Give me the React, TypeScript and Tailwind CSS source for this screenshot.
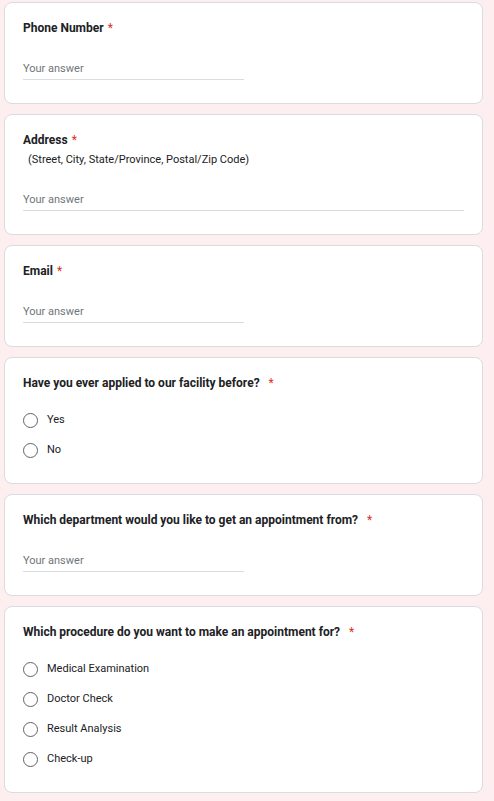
import React from 'react';

type Question =
    | { kind: 'text'; title: string; note?: string; wide?: boolean; gapStar?: boolean }
    | { kind: 'radio'; title: string; options: string[]; gapStar?: boolean };

const questions: Question[] = [
    { kind: 'text', title: 'Phone Number' },
    { kind: 'text', title: 'Address', note: '(Street, City, State/Province, Postal/Zip Code)', wide: true },
    { kind: 'text', title: 'Email' },
    { kind: 'radio', title: 'Have you ever applied to our facility before?', options: ['Yes', 'No'], gapStar: true },
    { kind: 'text', title: 'Which department would you like to get an appointment from?', gapStar: true },
    {
        kind: 'radio',
        title: 'Which procedure do you want to make an appointment for?',
        options: ['Medical Examination', 'Doctor Check', 'Result Analysis', 'Check-up'],
        gapStar: true,
    },
];

const Title: React.FC<{ text: string; gapStar?: boolean }> = ({ text, gapStar }) => (
    <div className="h-4 leading-4 text-[12px] font-bold text-[#202124]">
        {text}
        <span className={`text-[#d93025] font-normal ${gapStar ? 'ml-[9px]' : 'ml-[4px]'}`}>*</span>
    </div>
);

const QuestionCard: React.FC<{ q: Question }> = ({ q }) => {
    return (
        <div className={`bg-white border border-[#dadce0] rounded-lg px-[18px] pt-[17px] ${q.kind === 'radio' ? 'pb-[18px]' : 'pb-[23px]'}`}>
            <Title text={q.title} gapStar={q.gapStar} />

            {q.kind === 'text' && (
                <>
                    {q.note && (
                        <p className="mt-[4px] ml-[5px] h-4 leading-4 text-[11px] text-[#202124]">{q.note}</p>
                    )}
                    {/* answer line */}
                    <div
                        className={`${q.note ? 'mt-[24px]' : 'mt-[25px]'} pb-[2px] border-b border-[#dadce0] h-[19px] leading-4 text-[11px] text-[#70757a] ${q.wide ? 'w-full' : 'w-[221px]'}`}
                    >
                        Your answer
                    </div>
                </>
            )}

            {q.kind === 'radio' && (
                <div className="mt-[14px] flex flex-col">
                    {q.options.map(opt => (
                        <label key={opt} className="h-[30px] flex items-center">
                            <span className="w-[15px] h-[15px] rounded-full border-[1.5px] border-[#5f6368] shrink-0" />
                            <span className="ml-[9px] text-[11px] text-[#202124] leading-4">{opt}</span>
                        </label>
                    ))}
                </div>
            )}
        </div>
    );
};

export default function App() {
    return (
        <div
            className="min-h-[801px] bg-[#fdeef0] pl-[4px] pr-[11px] pt-[2px] pb-[6px] flex flex-col gap-[10px]"
            style={{ fontFamily: 'Roboto, "Liberation Sans", sans-serif' }}
        >
            {questions.map(q => (
                <QuestionCard key={q.title} q={q} />
            ))}
        </div>
    );
}
